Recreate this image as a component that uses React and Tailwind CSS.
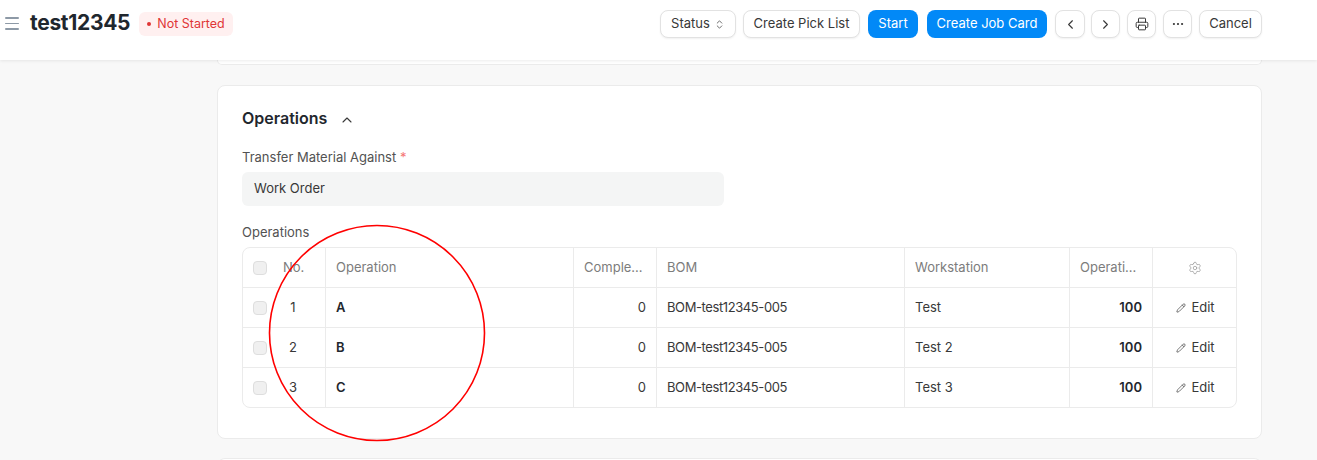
import React from 'react';
import { ChevronLeft, ChevronRight, Printer, Ellipsis, ChevronUp, Settings, Pencil, ChevronsUpDown } from 'lucide-react';

const rows = [
  { no: 1, op: 'A', done: 0, bom: 'BOM-test12345-005', ws: 'Test', time: 100 },
  { no: 2, op: 'B', done: 0, bom: 'BOM-test12345-005', ws: 'Test 2', time: 100 },
  { no: 3, op: 'C', done: 0, bom: 'BOM-test12345-005', ws: 'Test 3', time: 100 },
];

const cols = 'grid grid-cols-[83px_248px_83px_248px_165px_83px_1fr]';

const Btn = ({ children, primary, className = '' }) => (
  <button
    className={`h-7 flex items-center justify-center rounded-lg text-[13px] ${
      primary
        ? 'bg-[#0289f7] text-white'
        : 'bg-white border border-[#e2e2e2] text-[#383838] shadow-[0_1px_2px_rgba(0,0,0,0.06)]'
    } ${className}`}
  >
    {children}
  </button>
);

const Check = () => (
  <span className="w-[14px] h-[14px] rounded-[4px] bg-[#f0f0f0] border border-[#dedede] shrink-0" />
);

export default function App() {
  return (
    <div className="relative w-full h-[460px] overflow-hidden bg-[#f8f8f8] font-['Inter',sans-serif]">
      {/* Barre du haut */}
      <div className="relative z-10 h-[60px] bg-white shadow-[0_1px_3px_rgba(0,0,0,0.08)] pt-[10px] pl-[5px] pr-[55px]">
        <div className="h-7 flex items-center">
          <div className="flex flex-col gap-[4px] w-[14px] mr-[11px] -mt-[1px]">
            <span className="h-[1.5px] bg-[#8d99a6] rounded" />
            <span className="h-[1.5px] bg-[#8d99a6] rounded" />
            <span className="h-[1.5px] bg-[#8d99a6] rounded" />
          </div>
          <h1 className="text-[21px] font-bold text-[#1f272e] tracking-[-0.3px] -mt-[2px]">test12345</h1>
          <span className="ml-[9px] h-6 px-[8px] flex items-center gap-[6px] rounded-md bg-[#fff0f0] text-[#e03636] text-[12.5px]">
            <span className="w-1 h-1 rounded-full bg-[#e03636]" />
            Not Started
          </span>
          <div className="ml-auto flex items-center gap-[7px]">
            <Btn className="w-[76px] gap-1">
              Status <ChevronsUpDown size={11} strokeWidth={1.6} />
            </Btn>
            <Btn className="w-[117px]">Create Pick List</Btn>
            <Btn primary className="w-[50px] ml-[1px]">Start</Btn>
            <Btn primary className="w-[120px] ml-[2px]">Create Job Card</Btn>
            <Btn className="w-[30px] ml-[1px]"><ChevronLeft size={15} strokeWidth={1.8} /></Btn>
            <Btn className="w-[29px] -ml-[1px]"><ChevronRight size={15} strokeWidth={1.8} /></Btn>
            <Btn className="w-[29px]"><Printer size={14} strokeWidth={1.7} /></Btn>
            <Btn className="w-[29px]"><Ellipsis size={14} strokeWidth={1.8} /></Btn>
            <Btn className="w-[63px]">Cancel</Btn>
          </div>
        </div>
      </div>

      <div className="ml-[217px] w-[1045px]">
        {/* Bas de la carte précédente */}
        <div className="h-[5px] bg-white rounded-b-lg border border-t-0 border-[#ebebeb]" />

        {/* Carte Operations */}
        <div className="mt-5 bg-white rounded-lg border border-[#ebebeb] px-6 pt-5 pb-[30px]">
          <div className="flex items-center gap-[12px] h-6">
            <h2 className="text-[16px] font-semibold text-[#1f272e]">Operations</h2>
            <ChevronUp size={16} strokeWidth={1.6} className="text-[#383838] mt-[3px]" />
          </div>

          <div className="mt-[18px] text-[13px] leading-[18px] text-[#525252]">
            Transfer Material Against <span className="text-[#f57575]">*</span>
          </div>
          <div className="mt-[6px] w-[482px] h-[34px] rounded-md bg-[#f4f5f5] flex items-center px-3 text-[13px] text-[#383838]">
            Work Order
          </div>

          <div className="mt-[17px] text-[13px] leading-[18px] text-[#525252]">Operations</div>

          {/* Tableau */}
          <div className="mt-[6px] border border-[#ebebeb] rounded-lg text-[13px]">
            <div className={`${cols} h-[39px] text-[#7c7c7c]`}>
              <div className="flex items-center pl-[10px] border-r border-[#ebebeb]">
                <Check />
                <span className="ml-[16px]">No.</span>
              </div>
              <div className="flex items-center px-[10px] border-r border-[#ebebeb]">Operation</div>
              <div className="flex items-center px-[10px] border-r border-[#ebebeb]">Comple...</div>
              <div className="flex items-center px-[10px] border-r border-[#ebebeb]">BOM</div>
              <div className="flex items-center px-[10px] border-r border-[#ebebeb]">Workstation</div>
              <div className="flex items-center px-[10px] border-r border-[#ebebeb]">Operati...</div>
              <div className="flex items-center justify-center">
                <Settings size={14} strokeWidth={1.4} className="text-[#a0a0a0]" />
              </div>
            </div>
            {rows.map(r => (
              <div key={r.no} className={`${cols} h-10 border-t border-[#ebebeb] text-[#383838]`}>
                <div className="flex items-center pl-[10px] border-r border-[#ebebeb]">
                  <Check />
                  <span className="flex-1 text-center pr-[6px]">{r.no}</span>
                </div>
                <div className="flex items-center px-[10px] border-r border-[#ebebeb] font-semibold text-[#1f272e]">{r.op}</div>
                <div className="flex items-center justify-end px-[10px] border-r border-[#ebebeb]">{r.done}</div>
                <div className="flex items-center px-[10px] border-r border-[#ebebeb] tracking-[-0.4px]">{r.bom}</div>
                <div className="flex items-center px-[10px] border-r border-[#ebebeb]">{r.ws}</div>
                <div className="flex items-center justify-end px-[10px] border-r border-[#ebebeb] font-semibold text-[#1f272e]">{r.time}</div>
                <div className="flex items-center justify-center gap-[5px] pt-[1px] pl-[2px]">
                  <Pencil size={10} strokeWidth={1.6} />
                  <span>Edit</span>
                </div>
              </div>
            ))}
          </div>
        </div>

        {/* Haut de la carte suivante */}
        <div className="mt-[19px] h-8 bg-white rounded-t-lg border border-b-0 border-[#ebebeb]" />
      </div>

      {/* Annotation rouge */}
      <svg className="absolute left-[268px] top-[224px] pointer-events-none" width="218" height="218" viewBox="0 0 218 218">
        <ellipse cx="109" cy="109" rx="107.5" ry="107.5" fill="none" stroke="#ff0000" strokeWidth="1.6" />
      </svg>
    </div>
  );
}
